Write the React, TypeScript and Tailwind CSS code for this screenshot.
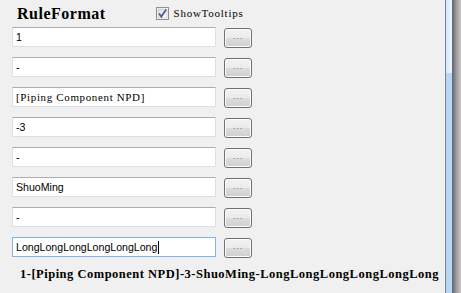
import React from 'react'

const fields = [
  { text: '1', serif: false },
  { text: '-', serif: false },
  { text: '[Piping Component NPD]', serif: true },
  { text: '-3', serif: false },
  { text: '-', serif: false },
  { text: 'ShuoMing', serif: false },
  { text: '-', serif: false },
  { text: 'LongLongLongLongLongLong', serif: false, focused: true },
]

function DotsButton() {
  return (
    <div className="ml-[8px] mt-[1px] flex h-[20px] w-[28px] shrink-0 items-center justify-center rounded-[3px] border border-[#707070] bg-[linear-gradient(#f2f2f2_0%,#ebebeb_50%,#dddddd_50%,#cfcfcf_100%)] shadow-[inset_0_0_0_1px_#fbfbfb]">
      <span className="mt-[-3px] font-['Liberation_Sans',sans-serif] text-[9px] leading-none tracking-[1px] text-[#8a6a3a]">...</span>
    </div>
  )
}

export default function App() {
  return (
    <div className="flex h-[293px] w-[461px] overflow-hidden bg-[#f0f0f0]">
      <div className="w-[446px]">
        <div className="flex h-[27px] items-center">
          <span className="ml-[17px] font-['Liberation_Serif',serif] text-[16px] font-bold leading-[18px] tracking-[0.5px] text-black">
            RuleFormat
          </span>
          <div className="ml-[50px] mt-[-1px] flex items-center">
            <svg width="13" height="13" viewBox="0 0 13 13">
              <defs>
                <linearGradient id="cb" x1="0" y1="0" x2="1" y2="1">
                  <stop offset="0" stopColor="#dcdcdc" />
                  <stop offset="1" stopColor="#ffffff" />
                </linearGradient>
              </defs>
              <rect x="0.5" y="0.5" width="12" height="12" fill="#fff" stroke="#8e8f8f" />
              <rect x="2" y="2" width="9" height="9" fill="url(#cb)" stroke="#b8b8b8" strokeWidth="0.6" />
              <path d="M3 6.5 L5.3 9.6 L10.2 2.6" fill="none" stroke="#4a5f97" strokeWidth="1.8" />
            </svg>
            <span className="ml-[5px] font-['Liberation_Serif',serif] text-[11px] leading-[12px] tracking-[0.75px] text-black">
              ShowTooltips
            </span>
          </div>
        </div>

        <div className="flex flex-col gap-[10px] pl-[12px]">
          {fields.map((f, i) => (
            <div key={i} className="flex h-[20px] items-start">
              <div
                className={
                  f.focused
                    ? 'flex h-[20px] w-[204px] items-center border border-[#7eb4ea] bg-white pl-[3px]'
                    : 'flex h-[20px] w-[204px] items-center border border-[#dcdfe5] border-t-[#abadb3] bg-white pl-[3px]'
                }
              >
                <span
                  className={
                    f.serif
                      ? "font-['Liberation_Serif',serif] text-[11px] leading-[12px] tracking-[0.64px] text-black"
                      : "font-['Liberation_Sans',sans-serif] text-[10.6px] leading-[12px] text-black"
                  }
                >
                  {f.text}
                </span>
                {f.focused && <span className="ml-[1px] h-[13px] w-px bg-black" />}
              </div>
              <DotsButton />
            </div>
          ))}
        </div>

        <div className="mt-[10px] whitespace-nowrap pl-[20px] font-['Liberation_Serif',serif] text-[12.5px] font-bold leading-[14px] tracking-[0.5px] text-black">
          1-[Piping Component NPD]-3-ShuoMing-LongLongLongLongLongLong
        </div>
      </div>

      <div className="w-px bg-[#72839b]" />
      <div className="flex w-[6px] flex-col">
        <div className="h-[73px] bg-[linear-gradient(90deg,#d6e7f9,#eef5fd)]" />
        <div className="flex-1 bg-[#b9d7f5]" />
      </div>
      <div className="w-px bg-[#5d6b7e]" />
      <div className="w-[8px] bg-[linear-gradient(90deg,#707070,#9a9a9a_40%,#c9c9c9)]" />
    </div>
  )
}
